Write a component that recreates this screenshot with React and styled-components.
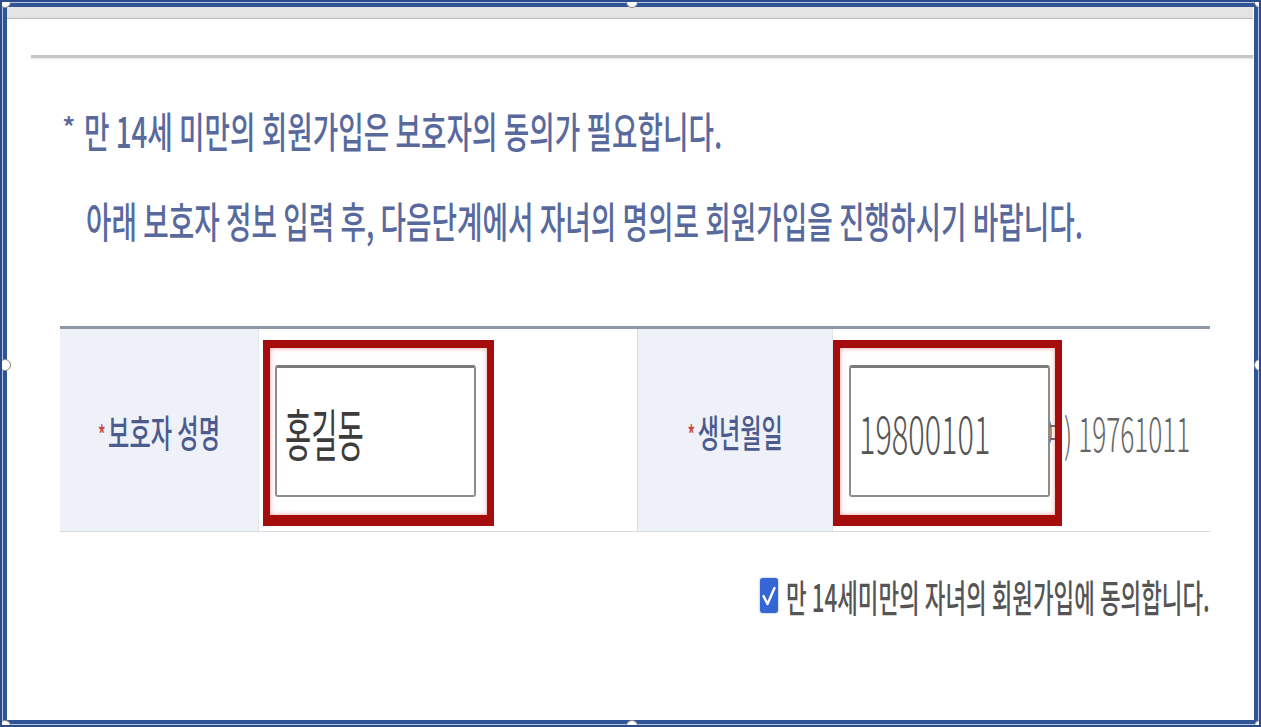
import React from "react";
import styled, { createGlobalStyle } from "styled-components";

const Global = createGlobalStyle`
  html, body { margin: 0; padding: 0; background: #fff; }
  body { font-family: "Noto Sans CJK KR", "Noto Sans", sans-serif; }
`;

const Frame = styled.div`
  position: relative;
  width: 1261px;
  height: 727px;
  box-sizing: border-box;
  border: 2px solid #2b4c8c;
  box-shadow: inset 0 0 0 1px #b7c5e2, inset 0 0 0 5px #2f5597;
  padding: 5px 6px 7px 5px;
  overflow: hidden;
`;

const Canvas = styled.div`
  height: 100%;
  display: flex;
  flex-direction: column;
  background: #fff;
`;

const TopBand = styled.div`
  height: 11px;
  background: #e4e4e4;
  border-bottom: 1px solid #b9b9b9;
  flex: none;
`;

const Rule = styled.div`
  margin: 36px 0 0 24px;
  height: 3px;
  background: #c6c6c6;
  box-shadow: 0 1px 2px rgba(0, 0, 0, 0.12);
  flex: none;
`;

const Notice = styled.div`
  margin: 27px 0 0 55px;
  color: #586a9d;
  font-size: 42px;
  font-weight: 500;
  line-height: 90px;
`;

const NoticeLine = styled.div`
  display: flex;
  align-items: center;
  padding-left: ${(p) => p.$indent || 0}px;
  height: 90px;
`;

const Squeeze = styled.span`
  display: inline-block;
  white-space: nowrap;
  transform: scaleX(${(p) => p.$sx});
  transform-origin: ${(p) => p.$origin || "left"} center;
`;

const Star = styled.span`
  font-size: ${(p) => p.$size || 24}px;
  margin-right: ${(p) => p.$gap || 10}px;
  color: ${(p) => p.$color || "inherit"};
  position: relative;
  top: ${(p) => p.$top || -4}px;
`;

const Table = styled.div`
  margin: 61px 0 0 53px;
  width: 1150px;
  display: grid;
  grid-template-columns: 198px 379px 195px 378px;
  height: 206px;
  box-sizing: border-box;
  border-top: 3px solid #8f98a9;
  border-bottom: 1px solid #d6dae1;
`;

const LabelCell = styled.div`
  background: #eef2f8;
  display: flex;
  align-items: center;
  justify-content: center;
  border-left: ${(p) => (p.$sep ? "1px solid #d9dde4" : "none")};
  color: #4b5b8e;
  font-size: 38px;
  font-weight: 500;
`;

const LabelText = styled.div`
  display: flex;
  align-items: center;
  width: 0;
  justify-content: center;
  white-space: nowrap;
`;

const InputCell = styled.div`
  display: flex;
  align-items: center;
  padding-left: 16px;
  border-left: 1px solid #e3e6eb;
  padding-top: 2px;
`;

const Field = styled.div`
  position: relative;
  flex: none;
`;

const TextBox = styled.div`
  width: 201px;
  height: 132px;
  box-sizing: border-box;
  border: 2px solid #8c8c8c;
  border-top: 3px solid #7a7a7a;
  border-radius: 3px;
  background: #fff;
  display: flex;
  align-items: center;
  padding-left: 8px;
  color: ${(p) => p.$color};
  font-size: ${(p) => p.$size}px;
  font-weight: ${(p) => p.$weight || 400};
  overflow: hidden;
  position: relative;
  z-index: 1;
`;

const Highlight = styled.div`
  position: absolute;
  top: -25px;
  bottom: -29px;
  left: ${(p) => p.$l}px;
  right: ${(p) => p.$r}px;
  border: 7px solid #a50d0d;
  border-top-width: 8px;
  border-bottom-width: 11px;
  box-shadow: inset 0 0 5px rgba(220, 80, 80, 0.55);
  z-index: 2;
  pointer-events: none;
`;

const Hint = styled.div`
  margin-left: -10px;
  color: #666;
  font-size: 46px;
  font-weight: 300;
  padding-top: 2px;
`;

const Agree = styled.label`
  margin: 36px 0 0 753px;
  display: flex;
  align-items: center;
  color: #555;
  font-size: 38px;
  font-weight: 500;
`;

const Check = styled.span`
  width: 18px;
  height: 35px;
  border-radius: 3px;
  background: #3566d6;
  box-shadow: 0 0 2px rgba(40, 80, 200, 0.6);
  display: flex;
  align-items: center;
  justify-content: center;
  margin-right: 8px;
  flex: none;
`;

const Handle = styled.span`
  position: absolute;
  width: 12px;
  height: 12px;
  border-radius: 50%;
  background: #fff;
  border: 1px solid #8a8a8a;
  box-sizing: border-box;
  left: ${(p) => p.$x - 6}px;
  top: ${(p) => p.$y - 6}px;
  z-index: 5;
`;

const handles = [
  [3, 0],
  [630, 0],
  [1258, 0],
  [3, 363],
  [1258, 363],
  [3, 724],
  [630, 724],
  [1258, 724],
];

export default function App() {
  return (
    <>
      <Global />
      <Frame>
        <Canvas>
          <TopBand />
          <Rule />
          <Notice>
            <NoticeLine>
              <Star $size={28} $gap={8}>*</Star>
              <Squeeze $sx={0.66}>만 14세 미만의 회원가입은 보호자의 동의가 필요합니다.</Squeeze>
            </NoticeLine>
            <NoticeLine $indent={24}>
              <Squeeze $sx={0.66}>
                아래 보호자 정보 입력 후, 다음단계에서 자녀의 명의로 회원가입을 진행하시기 바랍니다.
              </Squeeze>
            </NoticeLine>
          </Notice>
          <Table>
            <LabelCell>
              <LabelText>
                <Squeeze $sx={0.61} $origin="center">
                  <Star $color="#c9443c" $size={26} $gap={4} $top={-2}>*</Star>보호자 성명
                </Squeeze>
              </LabelText>
            </LabelCell>
            <InputCell>
              <Field>
                <TextBox $color="#3c3c3c" $size={56}>
                  <Squeeze $sx={0.51}>홍길동</Squeeze>
                </TextBox>
                <Highlight $l={-12} $r={-18} />
              </Field>
            </InputCell>
            <LabelCell $sep>
              <LabelText>
                <Squeeze $sx={0.61} $origin="center">
                  <Star $color="#c9443c" $size={26} $gap={4} $top={-2}>*</Star>생년월일
                </Squeeze>
              </LabelText>
            </LabelCell>
            <InputCell>
              <Field>
                <TextBox $color="#555" $size={52} $weight={300}>
                  <Squeeze $sx={0.59}>19800101</Squeeze>
                </TextBox>
                <Highlight $l={-16} $r={-12} />
              </Field>
              <Hint>
                <Squeeze $sx={0.57}>예) 19761011</Squeeze>
              </Hint>
            </InputCell>
          </Table>
          <Agree>
            <Check>
              <svg width="16" height="26" viewBox="0 0 16 26">
                <path d="M2.5 13 L6.5 21 L13.5 5" fill="none" stroke="#fff" strokeWidth="2.4" strokeLinecap="round" strokeLinejoin="round" />
              </svg>
            </Check>
            <Squeeze $sx={0.59}>만 14세미만의 자녀의 회원가입에 동의합니다.</Squeeze>
          </Agree>
        </Canvas>
        {handles.map(([x, y], i) => (
          <Handle key={i} $x={x} $y={y} />
        ))}
      </Frame>
    </>
  );
}
